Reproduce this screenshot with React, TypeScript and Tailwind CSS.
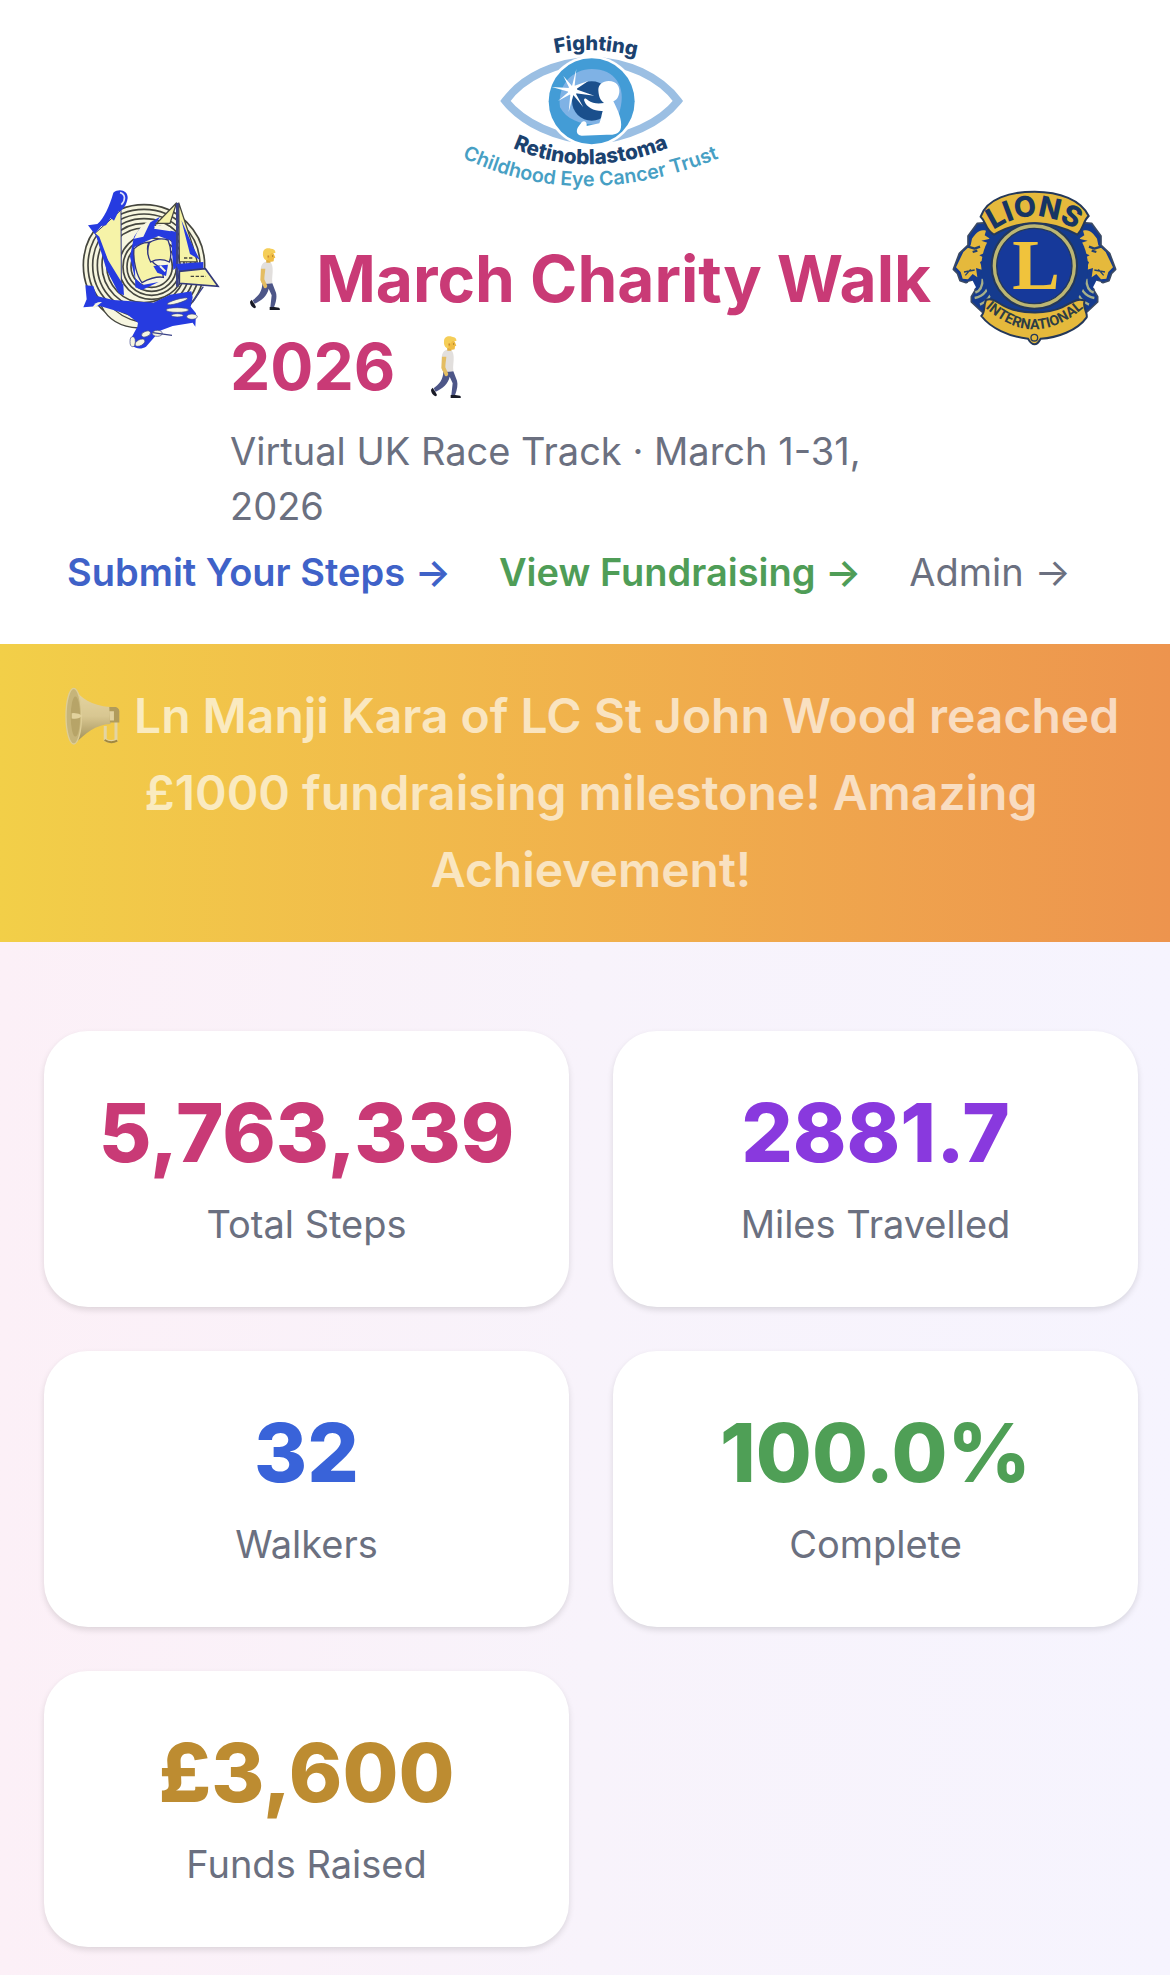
import React from "react";

function TrustLogo() {
  return (
    <svg viewBox="0 24 900 477" className="h-[159px] w-[300px] overflow-visible" role="img" aria-label="Fighting Retinoblastoma Childhood Eye Cancer Trust">
      <defs>
        <path id="arc-fighting" d="M346 100 Q466 74 620 117" />
        <path id="arc-retino" d="M218 384 Q455 490 730 365" />
        <path id="arc-trust" d="M66 412 Q440 596 900 388" />
      </defs>
      <path d="M196 243 C250 170 350 124 455 122 C560 124 660 170 714 243 C660 310 560 356 455 362 C350 356 250 310 196 243Z" fill="#fff" stroke="#9bbfe3" strokeWidth="24" />
      <circle cx="455" cy="244" r="137" fill="#fff" />
      <circle cx="455" cy="244" r="129" fill="#439cd6" />
      <path d="M360 262 C352 190 400 148 455 147 C525 147 560 200 540 270 C530 330 395 330 360 262Z" fill="#7fb2e5" />
      <circle cx="455" cy="243" r="59" fill="#1a4f8c" />
      <path d="M506 183 C530 183 540 200 538 217 C536 232 530 240 520 244 C533 270 547 300 543 322 C540 342 525 346 500 344 L425 347 C408 345 408 330 415 320 L425 307 C432 300 442 306 440 318 L478 310 C484 296 484 285 488 273 C462 274 440 262 433 243 C430 233 437 233 444 241 C458 251 475 252 492 249 C480 240 476 228 475 210 C475 194 488 183 506 183Z" fill="#fff" />
      <path d="M409 147 L404 197 L446 182 L408 208 L463 227 L407 220 L430 262 L400 225 L386 276 L391 223 L354 243 L386 215 L335 201 L388 204 L370 168 L396 198Z" fill="#fff" />
      <circle cx="398" cy="212" r="14" fill="#fff" />
      <g fontFamily="Inter, sans-serif">
        <text fill="#1b426f" fontWeight="800" fontSize="60"><textPath href="#arc-fighting">Fighting</textPath></text>
        <text fill="#1b426f" fontWeight="800" fontSize="62"><textPath href="#arc-retino">Retinoblastoma</textPath></text>
        <text fill="#479fc4" fontWeight="600" fontSize="59"><textPath href="#arc-trust">Childhood Eye Cancer Trust</textPath></text>
      </g>
    </svg>
  );
}

function ClubLogo() {
  const outer = [182, 168, 154, 140, 126, 112];
  const inner = [98, 86, 74, 62];
  return (
    <svg viewBox="60 51 420 495" className="h-[165px] w-[140px] shrink-0" role="img" aria-label="Club emblem">
      <circle cx="252" cy="286" r="184" fill="#f7f6e0" />
      {outer.map((r) => (
        <circle key={r} cx="252" cy="286" r={r} fill="none" stroke="#45463f" strokeWidth="5" />
      ))}
      <circle cx="275" cy="285" r="104" fill="#f7f6e0" />
      {inner.map((r) => (
        <circle key={r} cx="275" cy="290" r={r} fill="none" stroke="#45463f" strokeWidth="5" />
      ))}
      <path d="M183 120 L184 345 L150 290 L118 215 L105 190 L150 150Z" fill="#f6f3a8" stroke="#2f3480" strokeWidth="3" />
      <path d="M160 68 C178 54 204 62 203 84 C200 105 190 120 176 124 L162 152 L152 144 L138 166 L124 168 L104 192 L84 166 L112 162 C132 145 148 110 160 68Z" fill="#263be0" />
      <path d="M180 68 C196 72 198 90 184 104" fill="none" stroke="#dfe2fa" strokeWidth="5" />
      <path d="M106 190 L118 200 L144 270 L190 345 L192 376 L176 370 L140 300Z" fill="#263be0" />
      <path d="M222 200 L240 175 L300 140 L282 172 L350 186 L352 290 L340 300 L334 212 L296 198 L262 212 L222 232 L226 330 L210 260Z" fill="#263be0" />
      <path d="M222 206 Q238 164 274 150 L250 200Z M282 176 L332 184 L330 172 L290 164Z" fill="#f7f6e0" />
      <path d="M222 236 Q245 216 266 218 C256 245 268 280 306 294 L310 322 C290 318 262 328 246 338 C232 320 218 276 222 236Z" fill="#f6f3a8" stroke="#2f3480" strokeWidth="4" />
      <path d="M268 218 Q296 200 324 210 C334 235 334 260 328 276 Q300 262 272 276 C260 255 262 235 268 218Z" fill="#f6f3a8" stroke="#2f3480" strokeWidth="4" />
      <path d="M280 288 L324 284 L318 318 L292 308Z" fill="#263be0" />
      <path d="M300 288 L316 304" stroke="#f7f6e0" strokeWidth="6" />
      <path d="M225 325 L248 345 L296 336 L246 360 L226 352Z" fill="#263be0" />
      <path d="M350 98 L330 160 L290 160Z" fill="#f6f3a8" stroke="#45463f" strokeWidth="4" />
      <path d="M356 98 L358 275 L412 276 L398 226Z" fill="#f6f3a8" stroke="#45463f" strokeWidth="4" />
      <path d="M364 150 L400 232 L420 270 L390 252Z" fill="#263be0" />
      <path d="M348 100 L356 98 L356 350 L348 350Z" fill="#3b4388" />
      <path d="M346 282 L430 276 L430 296 L358 304Z" fill="#263be0" />
      <path d="M358 304 L436 296 L474 349 L358 340Z" fill="#f6f3a8" stroke="#33397a" strokeWidth="5" />
      <path d="M372 264 H402 M392 319 H438" stroke="#45463f" strokeWidth="4" strokeDasharray="10 5" />
      <path d="M124 408 Q154 470 236 474 L238 456 Q182 444 144 400Z" fill="#f7f6e0" stroke="#45463f" strokeWidth="4" />
      <path d="M76 346 L100 348 L110 378 L160 390 L280 398 L330 374 L394 364 L398 382 L392 410 L408 430 L406 470 L398 458 L338 468 L300 482 L258 530 C240 542 208 534 212 508 L232 470 L234 458 L200 432 L120 408 L70 412 L80 388Z" fill="#263be0" />
      <path d="M98 412 Q106 394 126 396 L104 414Z" fill="#f7f6e0" />
      <g fill="#f7f6e0" stroke="#3b4388" strokeWidth="2">
        <ellipse cx="218" cy="515" rx="8" ry="15" />
        <ellipse cx="240" cy="518" rx="16" ry="9" transform="rotate(-28 240 518)" />
        <ellipse cx="258" cy="492" rx="14" ry="8" transform="rotate(-20 258 492)" />
        <ellipse cx="292" cy="490" rx="15" ry="9" />
        <ellipse cx="352" cy="420" rx="34" ry="7" />
        <ellipse cx="396" cy="440" rx="16" ry="8" />
        <ellipse cx="352" cy="394" rx="32" ry="6" transform="rotate(-16 352 394)" />
        <ellipse cx="352" cy="436" rx="18" ry="5" />
      </g>
      <path d="M278 488 L336 496 M398 396 L430 350" stroke="#3b4388" strokeWidth="4" />
    </svg>
  );
}

function LionHead() {
  return (
    <g strokeLinejoin="round">
      <path d="M140 128 L112 130 L84 168 L84 195 L58 220 L40 268 L52 280 L60 302 L78 308 L92 302 L106 330 L94 350 L94 366 L126 396 L180 390 L180 140Z" fill="#153b8e" stroke="#3b4a63" strokeWidth="5" />
      <path d="M84 306 L98 302 L108 322 L100 330 L90 322Z" fill="#fff" />
      <path d="M138 152 C118 146 108 160 96 176 L92 196 L70 216 L48 262 L62 276 L68 296 L84 298 L98 282 L112 292 L108 264 L128 270 L120 246 L138 236 L118 226 L146 214 L142 188 L124 182 L150 176 L134 166Z" fill="#e5b93c" />
      <path d="M84 200 L104 206 L120 200 M98 216 L112 212" stroke="#23406f" strokeWidth="7" fill="none" />
      <path d="M72 276 L104 270 M76 286 L92 268" stroke="#23406f" strokeWidth="4" />
      <path d="M106 338 Q128 330 128 296 M104 354 Q146 346 152 292 M120 374 Q148 362 158 330" stroke="#a7b08a" strokeWidth="7" fill="none" />
    </g>
  );
}

function LionsLogo() {
  return (
    <svg viewBox="30 21 507 495" className="h-[165px] w-[169px] shrink-0" role="img" aria-label="Lions International">
      <defs>
        <path id="arc-lions" d="M126 176 Q283 42 440 176" />
        <path id="arc-intl" d="M130 378 Q283 518 436 378" />
      </defs>
      <LionHead />
      <g transform="translate(567 0) scale(-1 1)"><LionHead /></g>
      <circle cx="284" cy="260" r="160" fill="#153b8e" />
      <path d="M122 110 C140 56 210 35 284 35 C358 35 424 60 446 108 C428 124 432 144 412 164 C330 118 240 118 162 164 C134 148 140 126 122 110Z" fill="#e5b93c" stroke="#24385a" strokeWidth="6" />
      <path d="M138 360 C160 350 180 376 206 384 C250 402 322 402 366 382 C394 370 410 352 434 362 C426 382 444 398 440 412 C412 452 350 474 302 476 Q284 510 264 476 C206 470 152 444 124 408 C136 396 130 378 138 360Z" fill="#e5b93c" stroke="#24385a" strokeWidth="6" />
      <circle cx="283" cy="258" r="128" fill="#bcb673" stroke="#24385a" strokeWidth="6" />
      <circle cx="283" cy="258" r="113" fill="#16399a" stroke="#24385a" strokeWidth="4" />
      <text x="288" y="327" textAnchor="middle" fill="#f0c33c" fontFamily="Liberation Serif, serif" fontWeight="700" fontSize="214">L</text>
      <text fill="#173563" fontFamily="Inter, sans-serif" fontWeight="800" fontSize="86"><textPath href="#arc-lions" startOffset="50%" textAnchor="middle">LIONS</textPath></text>
      <text fill="#2e3d44" fontFamily="Roboto, sans-serif" fontWeight="700" fontSize="43"><textPath href="#arc-intl" startOffset="50%" textAnchor="middle">INTERNATIONAL</textPath></text>
      <circle cx="283" cy="473" r="10" fill="none" stroke="#24385a" strokeWidth="4" />
    </svg>
  );
}

function Walker() {
  return (
    <svg viewBox="33 50 201 198" className="mr-1 inline-block h-[66px] w-[67px] align-[-10px]" role="img" aria-label="Person walking">
      <path d="M130 162 C130 188 116 202 101 213 L107 223 C128 214 145 198 149 178 L158 198 L154 234 H165 C172 215 174 202 171 190 L160 162Z" fill="#4d5688" />
      <path d="M98 211 L93 217 C93 226 100 235 108 237 L111 233 L106 223Z M152 233 H166 L180 235 Q184 238 182 242 H152Z" fill="#181a26" />
      <path d="M142 97 C132 97 125 108 125 122 L126 160 Q142 166 160 161 C158 145 162 132 161 118 C160 104 156 98 148 96Z" fill="#e2dfdd" />
      <path d="M126 118 L139 118 C138 130 136 140 136 150 L145 170 Q142 180 135 175 L124 152Z" fill="#e4bd62" />
      <path d="M141 88 L156 92 L154 100 H142Z" fill="#dfae43" />
      <path d="M138 76 C142 64 165 64 166 78 L169 85 L165 87 L164 96 Q154 99 144 92Z" fill="#f0bd45" />
      <path d="M132 72 C132 58 144 54 156 58 C164 59 170 62 169 71 L157 72 L150 80 L144 82 L146 92 L140 92 C133 88 131 80 132 72Z" fill="#f5ce58" />
      <path d="M145 79 Q151 76 150 83 L147 86Z" fill="#c98a32" />
      <path d="M161 78 v4" stroke="#694619" strokeWidth="2" />
    </svg>
  );
}

function Megaphone() {
  return (
    <svg viewBox="20 18 176 176" className="inline-block h-[59px] w-[59px] align-[-13px]" role="img" aria-label="Announcement">
      <defs>
        <linearGradient id="horn" x1="0" y1="0" x2="0" y2="1">
          <stop offset="0" stopColor="#e0ddd4" />
          <stop offset="0.5" stopColor="#cbc5b8" />
          <stop offset="1" stopColor="#6f6959" />
        </linearGradient>
      </defs>
      <path d="M146 134 V176 Q160 184 178 178 V110" fill="none" stroke="#dedbd2" strokeWidth="9" />
      <path d="M144 176 Q162 188 182 178" fill="none" stroke="#77653a" strokeWidth="6" />
      <path d="M52 22 C72 50 105 74 160 78 L162 128 C116 130 88 156 52 189Z" fill="url(#horn)" />
      <path d="M158 78 H178 Q190 82 188 98 V124 H160Z" fill="#8e8467" />
      <path d="M158 90 H172 V118 H160Z" fill="#d9d6cd" />
      <ellipse cx="52" cy="105" rx="23" ry="83" fill="#b0a995" stroke="#d3cfc2" strokeWidth="4" />
      <ellipse cx="57" cy="106" rx="14" ry="60" fill="#989079" />
      <path d="M46 96 Q66 94 78 104 Q66 116 46 112Z" fill="#dad6ca" />
    </svg>
  );
}

const stats = [
  { value: "5,763,339", label: "Total Steps", color: "text-[#c93a76]" },
  { value: "2881.7", label: "Miles Travelled", color: "text-[#8939de]" },
  { value: "32", label: "Walkers", color: "text-[#3963d9]" },
  { value: "100.0%", label: "Complete", color: "text-[#4f9f56]" },
  { value: "£3,600", label: "Funds Raised", color: "text-[#bd8c31]" },
];

export default function App() {
  return (
    <div className="min-h-screen bg-linear-to-r from-[#fcf0f7] via-[#f8f3fb] to-[#f6f4fe] font-[Inter,sans-serif]">
      <header className="bg-white pt-7 pb-11">
        <div className="flex justify-center pl-[10px]">
          <TrustLogo />
        </div>
        <div className="flex items-start gap-[10px] pr-[51px] pl-20">
          <ClubLogo />
          <div className="min-w-0 flex-1 pt-12">
            <h1 className="text-[64px] leading-[88px] font-bold text-[#c93a76]">
              <Walker /> March Charity Walk 2026 <Walker />
            </h1>
            <p className="mt-[13px] text-[38px] leading-[55px] text-[#6b7080]">Virtual UK Race Track · March 1-31, 2026</p>
          </div>
          <LionsLogo />
        </div>
        <nav className="mt-[11px] flex gap-12 pl-[67px] text-[38px] leading-[55px] whitespace-nowrap">
          <a href="#submit" className="font-semibold text-[#3f62c8]">Submit Your Steps →</a>
          <a href="#fundraising" className="font-semibold text-[#4f9d57]">View Fundraising →</a>
          <a href="#admin" className="text-[#6b7080]">Admin →</a>
        </nav>
      </header>
      <section className="bg-linear-to-r from-[#f2cf48] to-[#ed944e] pt-[33px] pr-8 pb-[34px] pl-11">
        <p className="text-center text-[48px] leading-[77px] font-semibold text-white opacity-65">
          <Megaphone /> Ln Manji Kara of LC St John Wood reached £1000 fundraising milestone! Amazing Achievement!
        </p>
      </section>
      <main className="grid grid-cols-2 gap-11 pt-[89px] pr-8 pb-7 pl-11">
        {stats.map((s) => (
          <section key={s.label} className="flex h-[276px] flex-col items-center rounded-[44px] bg-white pt-[53px] shadow-[0_3px_6px_rgba(0,0,0,0.12)]">
            <p className={`text-[81px] leading-[99px] font-extrabold ${s.color}`}>{s.value}</p>
            <p className="mt-[14px] text-[38px] leading-[55px] text-[#6b7080]">{s.label}</p>
          </section>
        ))}
      </main>
    </div>
  );
}
